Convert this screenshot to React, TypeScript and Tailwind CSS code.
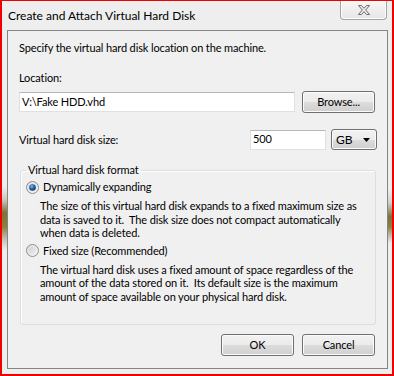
const btn =
  "flex items-center justify-center w-[73px] h-[22px] rounded-[3px] border border-[#707070] bg-[linear-gradient(to_bottom,#f2f2f2_0%,#ebebeb_50%,#dddddd_50%,#cfcfcf_100%)] shadow-[inset_0_0_0_1px_#fbfbfb]";

const field =
  "flex items-center h-[20px] pl-[2px] bg-white border border-[#dde1e6] border-t-[#b4b7bd] rounded-[1px]";

function Radio({ checked }: { checked?: boolean }) {
  return (
    <svg width="13" height="13" viewBox="0 0 13 13" className="shrink-0">
      <defs>
        <linearGradient id="rfill" x1="0" y1="0" x2="1" y2="1">
          <stop offset="0" stopColor="#cbcbcb" />
          <stop offset="1" stopColor="#f6f6f6" />
        </linearGradient>
        <radialGradient id="rdot" cx="0.4" cy="0.35" r="0.7">
          <stop offset="0" stopColor="#8fc2ee" />
          <stop offset="0.45" stopColor="#2a6bb3" />
          <stop offset="1" stopColor="#0d2f62" />
        </radialGradient>
      </defs>
      <circle cx="6.5" cy="6.5" r="6" fill="url(#rfill)" stroke="#8e8f8f" strokeWidth="1" />
      <circle cx="6.5" cy="6.5" r="4.6" fill="none" stroke="#f4f4f4" strokeWidth="0.8" />
      {checked && <circle cx="6.5" cy="6.5" r="3.3" fill="url(#rdot)" />}
    </svg>
  );
}

export default function App() {
  return (
    <div className="w-[394px] h-[376px] flex flex-col bg-[#eeeeee] border-l-2 border-r-2 border-t border-b-2 border-[#f20000] text-black text-[11px] tracking-[-0.13px] font-['Lato',sans-serif]">
      {/* Title bar */}
      <div className="h-[29px] flex items-start justify-between pl-[6px] pr-[5px]">
        <div className="mt-[8px] text-[12px] tracking-normal leading-[14px]">Create and Attach Virtual Hard Disk</div>
        <div className="w-[47px] h-[19px] flex items-center justify-center rounded-b-[4px] border border-t-0 border-[#a4a4a4] bg-[linear-gradient(to_bottom,#f7f7f7,#e6e6e6)] shadow-[inset_0_0_0_1px_#fdfdfd]">
          <svg width="14" height="12" viewBox="0 0 14 12">
            <path
              d="M1.5 1.5 H4.5 L7 4.3 L9.5 1.5 H12.5 L8.7 6 L12.5 10.5 H9.5 L7 7.7 L4.5 10.5 H1.5 L5.3 6 Z"
              fill="#ececec"
              stroke="#6e6e6e"
              strokeWidth="1"
              strokeLinejoin="round"
            />
          </svg>
        </div>
      </div>

      {/* Body with frame edges */}
      <div className="flex flex-1 pb-[5px]">
        <div className="w-[5px] bg-[linear-gradient(to_bottom,#eeeeee_0%,#eeeeee_46%,#c9c9c2_50%,#7d7235_54%,#8d7f3f_58%,#c7c5b9_62%,#eeeeee_65%,#eeeeee_100%)]" />
        <div className="flex-1 flex flex-col border border-[#858585] bg-[#f0f0f0] pl-[11px] pr-[12px]">
          <div className="mt-[10px] leading-[14px]">Specify the virtual hard disk location on the machine.</div>
          <div className="mt-[16px] leading-[14px]">Location:</div>
          <div className="mt-[6px] flex items-center gap-[7px]">
            <div className={`${field} w-[276px]`}>V:\Fake HDD.vhd</div>
            <button className={btn}>Browse...</button>
          </div>
          <div className="mt-[16px] flex items-center h-[21px]">
            <div className="leading-[14px]">Virtual hard disk size:</div>
            <div className={`${field} w-[76px] ml-auto`}>500</div>
            <div className="ml-[5px] -mr-[2px] w-[46px] h-[21px] flex items-center justify-between pl-[4px] pr-[6px] rounded-[3px] border border-[#707070] bg-[linear-gradient(to_bottom,#f2f2f2_0%,#ebebeb_50%,#dddddd_50%,#cfcfcf_100%)] shadow-[inset_0_0_0_1px_#fbfbfb]">
              <span className="text-[12px]">GB</span>
              <svg width="7" height="4" viewBox="0 0 7 4">
                <path d="M0 0 H7 L3.5 4 Z" fill="#000" />
              </svg>
            </div>
          </div>

          <fieldset className="mt-[13px] ml-[1px] -mr-[1px] border border-[#d5dfe5] rounded-[3px] shadow-[inset_1px_1px_0_#ffffff] pb-[21px]">
            <legend className="ml-[5px] px-[2px] leading-[14px]">Virtual hard disk format</legend>
            <div className="mt-[3px] pl-[5px] flex items-center gap-[4px] leading-[14px]">
              <Radio checked />
              <span>Dynamically expanding</span>
            </div>
            <div className="mt-[5px] pl-[19px] leading-[13.5px] whitespace-pre">
              {"The size of this virtual hard disk expands to a fixed maximum size as\ndata is saved to it.  The disk size does not compact automatically\nwhen data is deleted."}
            </div>
            <div className="mt-[4px] pl-[5px] flex items-center gap-[4px] leading-[14px]">
              <Radio />
              <span>Fixed size (Recommended)</span>
            </div>
            <div className="mt-[5px] pl-[19px] leading-[13.5px] whitespace-pre">
              {"The virtual hard disk uses a fixed amount of space regardless of the\namount of the data stored on it.  Its default size is the maximum\namount of space available on your physical hard disk."}
            </div>
          </fieldset>

          <div className="mt-[9px] flex justify-end gap-[8px]">
            <button className={btn}>OK</button>
            <button className={btn}>Cancel</button>
          </div>
        </div>
        <div className="w-[4px] bg-[linear-gradient(to_bottom,#eeeeee_0%,#eeeeee_47%,#cfcfcb_51%,#7d7235_55%,#8d7f3f_58%,#c7c5b9_61%,#eeeeee_63%,#eeeeee_100%)]" />
      </div>
    </div>
  );
}
